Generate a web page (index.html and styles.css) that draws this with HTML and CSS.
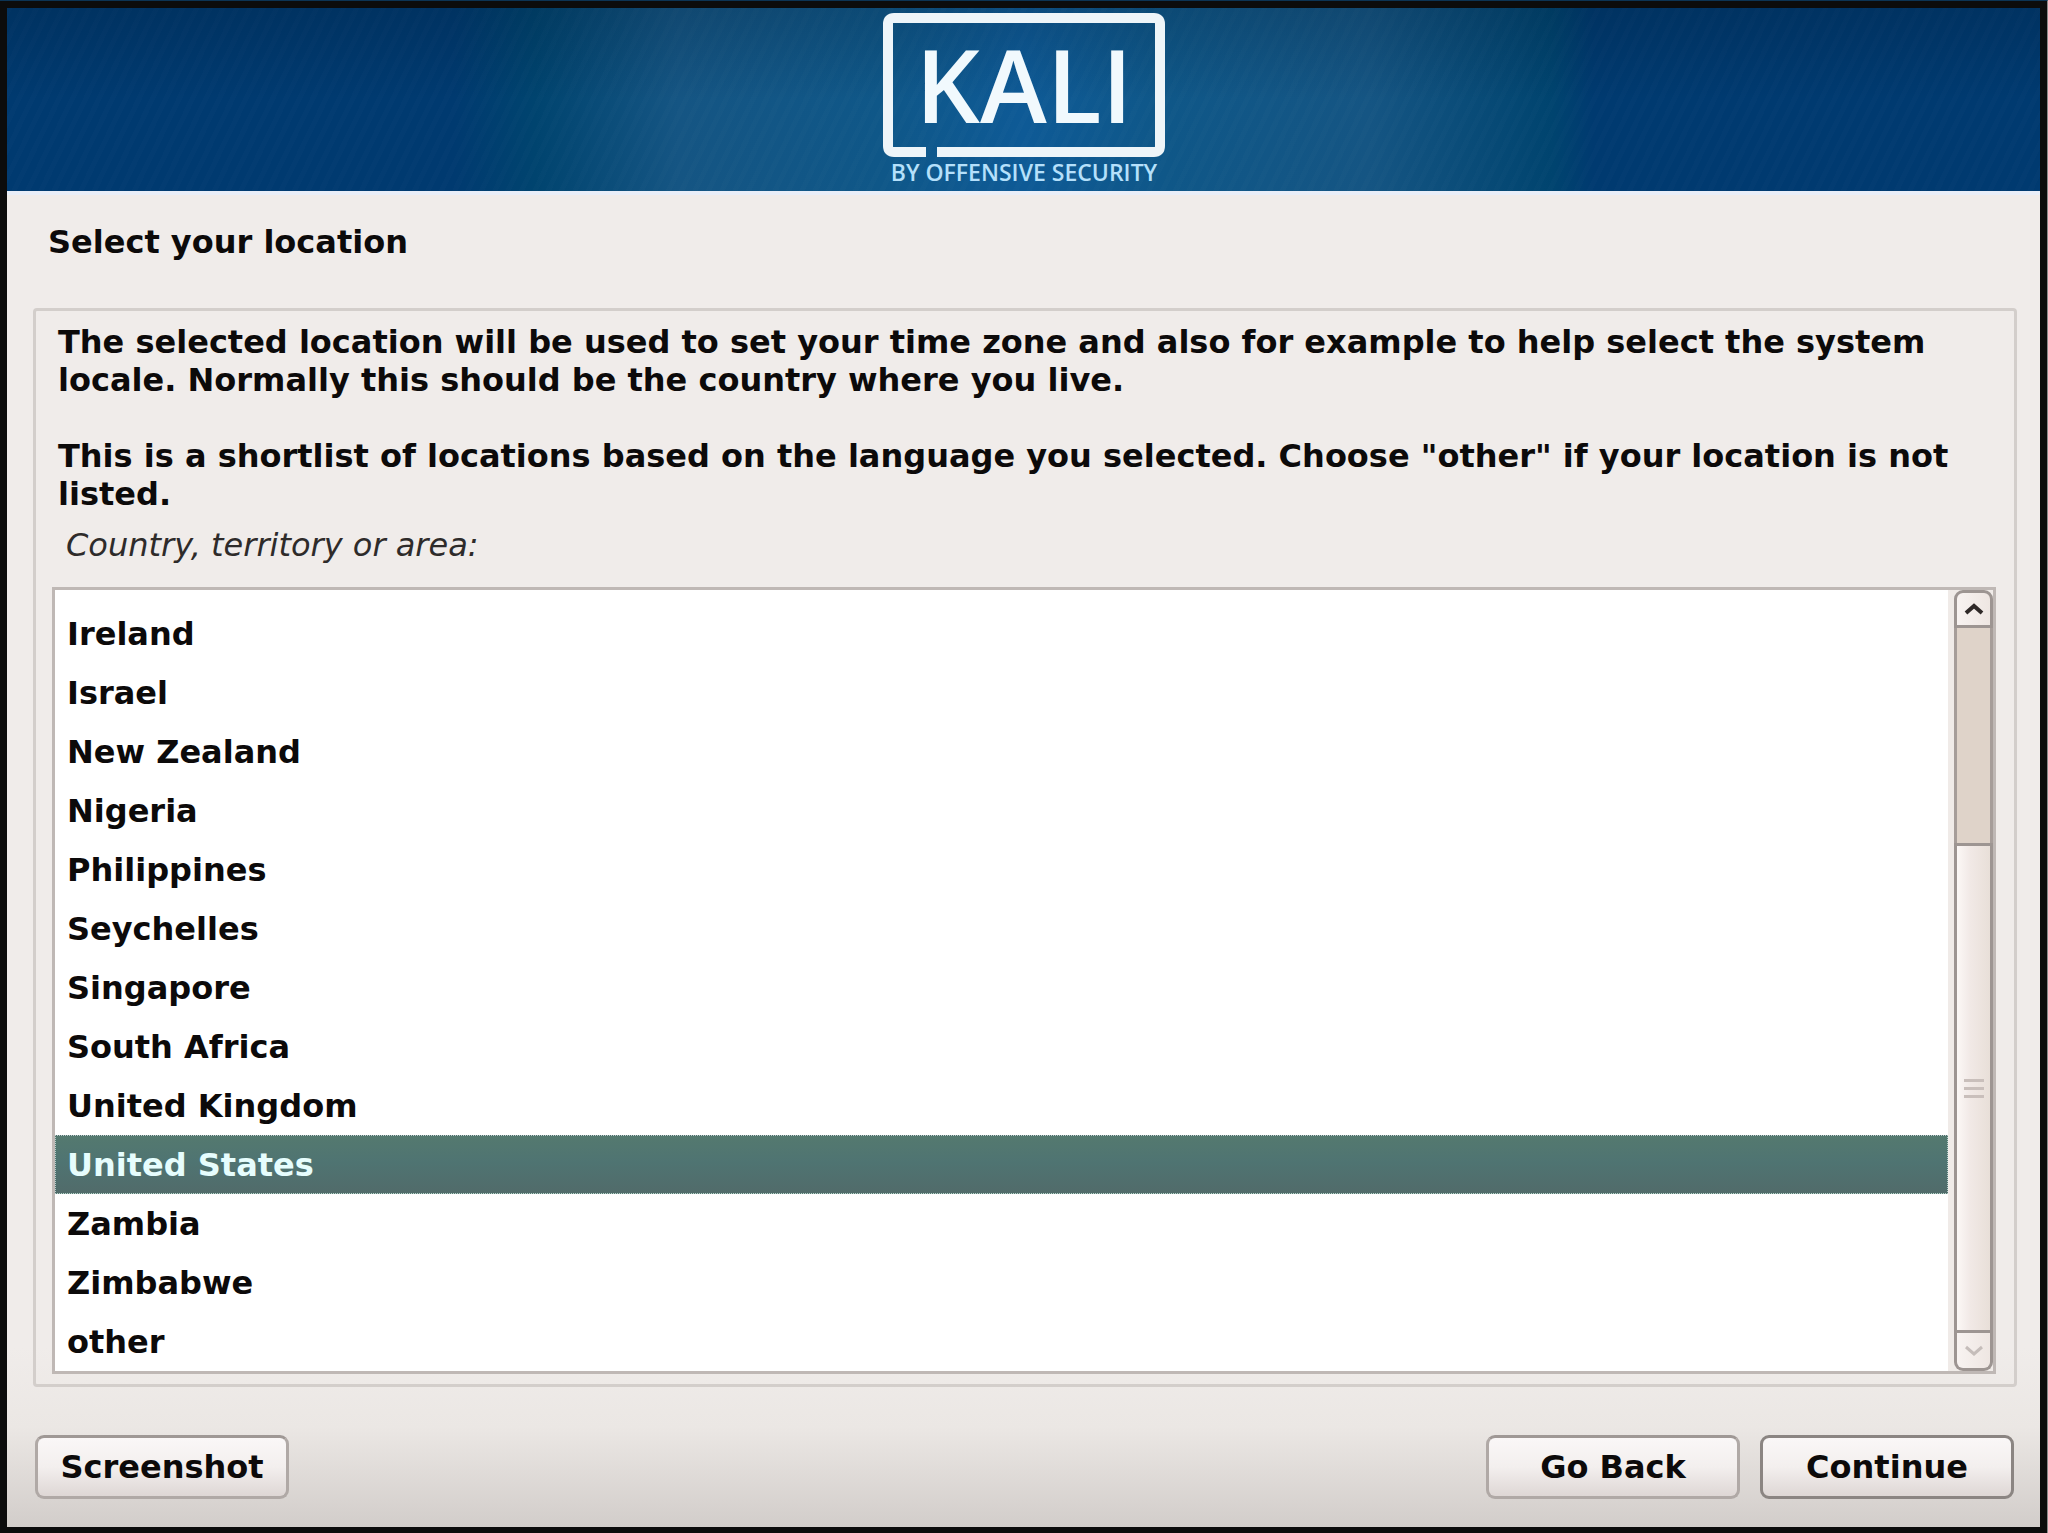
FILE: index.html
```html
<!DOCTYPE html>
<html lang="en">
<head>
<meta charset="utf-8">
<title>Kali Linux installer</title>
<link rel="stylesheet" href="styles.css">
</head>
<body>
<div class="screen">
  <header class="banner">
    <svg class="logo" viewBox="0 0 290 183" role="img" aria-label="Kali by Offensive Security">
      <path class="logo-frame" d="M47 144H15Q9 144 9 138V16Q9 10 15 10H275Q281 10 281 16V138Q281 144 275 144H58"/>
      <text class="logo-name" x="145" y="115">KALI</text>
      <text class="logo-tag" x="145" y="173">BY OFFENSIVE SECURITY</text>
    </svg>
  </header>
  <main class="content">
    <h1 class="title">Select your location</h1>
    <section class="panel">
      <div class="description">
        <p>The selected location will be used to set your time zone and also for example to help select the system locale. Normally this should be the country where you live.</p>
        <p>This is a shortlist of locations based on the language you selected. Choose "other" if your location is not listed.</p>
      </div>
      <label class="field-label" for="country">Country, territory or area:</label>
      <div class="listbox">
        <select class="countries" id="country" size="13">
          <option>Ireland</option>
          <option>Israel</option>
          <option>New Zealand</option>
          <option>Nigeria</option>
          <option>Philippines</option>
          <option>Seychelles</option>
          <option>Singapore</option>
          <option>South Africa</option>
          <option>United Kingdom</option>
          <option selected>United States</option>
          <option>Zambia</option>
          <option>Zimbabwe</option>
          <option>other</option>
        </select>
        <div class="scrollbar">
          <button class="step step-up" type="button" aria-label="Scroll up">
            <svg class="chevron" viewBox="0 0 20 12"><path d="M2 10L10 3L18 10"/></svg>
          </button>
          <div class="track"></div>
          <div class="thumb"><span></span><span></span><span></span></div>
          <button class="step step-down" type="button" aria-label="Scroll down" disabled>
            <svg class="chevron" viewBox="0 0 20 12"><path d="M2 2L10 9L18 2"/></svg>
          </button>
        </div>
      </div>
    </section>
    <footer class="actions">
      <button class="button" type="button">Screenshot</button>
      <div class="actions-end">
        <button class="button" type="button">Go Back</button>
        <button class="button button-default" type="submit">Continue</button>
      </div>
    </footer>
  </main>
</div>
</body>
</html>
```
FILE: styles.css
```css
* {
  box-sizing: border-box;
}

body {
  margin: 0;
  display: flex;
  flex-direction: column;
  min-height: 100vh;
  border: 1px solid #8a8a8a;
  border-top-color: #0c3454;
  border-left: 0;
  font-family: "DejaVu Sans", sans-serif;
  font-size: 32px;
  font-weight: bold;
  line-height: 38px;
  color: #0c0a0a;
}

.screen {
  flex: 1;
  display: flex;
  flex-direction: column;
  border: 7px solid #0c0c0c;
}

.banner {
  display: flex;
  justify-content: center;
  height: 183px;
  background:
    linear-gradient(rgba(0, 20, 40, 0.2), transparent 50%),
    repeating-linear-gradient(116deg, rgba(255, 255, 255, 0.01) 0 5px, transparent 5px 12px),
    linear-gradient(90deg, #003a70 0, #003a70 22%, #00446f 26%, #155583 33%, #0f5788 43%, #0e5a96 50%, #0f5788 57%, #155583 67%, #00446f 76%, #003a70 78%);
}

.logo {
  width: 290px;
  height: 183px;
}

.logo-frame {
  fill: none;
  stroke: #eef5f9;
  stroke-width: 10;
}

.logo-name,
.logo-tag {
  font-family: "Open Sans", sans-serif;
  font-weight: 600;
  text-anchor: middle;
}

.logo-name {
  font-size: 101px;
  fill: #f1f9fd;
}

.logo-tag {
  font-size: 23px;
  fill: #b5e0fb;
}

.content {
  flex: 1;
  display: flex;
  flex-direction: column;
  padding: 28px 23px 28px 26px;
  border-top: 4px solid #e9eef8;
  background: linear-gradient(#f0ecea calc(100% - 180px), #ebe7e4 calc(100% - 100px), #d2cdca);
}

.title {
  margin: 0 15px 47px;
  font-size: 32px;
}

.panel {
  flex: 1;
  display: flex;
  flex-direction: column;
  padding: 12px 18px 10px 16px;
  border: 3px solid #d3cecb;
  border-radius: 4px;
}

.description {
  display: flex;
  flex-direction: column;
  gap: 38px;
  padding: 0 6px;
}

.description p {
  margin: 0;
}

.field-label {
  margin: 13px 14px 23px;
  font-style: italic;
  font-weight: normal;
  color: #2e2b2a;
}

.listbox {
  flex: 1;
  display: flex;
  border: 3px solid #bfb8b5;
  background: #f0ebe8;
}

.countries {
  flex: 1;
  min-width: 0;
  padding: 14px 0 0;
  border: 0;
  border-radius: 0;
  outline: 0;
  overflow: hidden;
  background: #fff;
  font: inherit;
  color: inherit;
}

.countries option {
  height: 59px;
  padding: 11px 12px 0;
  font-weight: bold;
}

.countries option:checked {
  padding: 10px 11px 0;
  border: 1px dotted #b9d0cc;
  background: linear-gradient(#54796f, #4f7472 45%, #516b6a);
  -webkit-text-fill-color: #e6fdfd;
}

.scrollbar {
  display: flex;
  flex-direction: column;
  width: 39px;
  margin: 0 0 0 6px;
}

.step {
  display: flex;
  align-items: center;
  justify-content: center;
  height: 38px;
  padding: 0;
  border: 3px solid #9d9592;
  background: linear-gradient(90deg, #f8f3f1, #eee6e2);
}

.step-up {
  border-radius: 9px 9px 0 0;
}

.step-down {
  border-top-width: 0;
  border-radius: 0 0 9px 9px;
}

.chevron {
  width: 20px;
  height: 12px;
  fill: none;
  stroke: #2f2928;
  stroke-width: 4;
}

.step-down .chevron {
  stroke: #c5bdba;
  stroke-width: 3;
}

.track {
  flex: 217;
  border: solid #a69d99;
  border-width: 0 3px;
  background: #dfd3c9;
}

.thumb {
  flex: 487;
  display: flex;
  flex-direction: column;
  align-items: center;
  justify-content: center;
  gap: 5px;
  border: 3px solid #9d9592;
  background: linear-gradient(90deg, #fcf8f6, #f1e9e6 40%, #e8dfd8);
}

.thumb span {
  width: 20px;
  height: 3px;
  background: #c9bfbb;
}

.actions,
.actions-end {
  display: flex;
  justify-content: space-between;
}

.actions {
  padding: 48px 3px 0 2px;
}

.actions-end {
  gap: 20px;
}

.button {
  width: 254px;
  height: 64px;
  padding: 0;
  border: 3px solid #b0a9a6;
  border-top-color: #9f9895;
  border-radius: 9px;
  background: linear-gradient(#faf7f7, #f3efee 50%, #ded7d5);
  font: inherit;
  color: inherit;
}

.button-default {
  border-color: #8b8582;
}
```
